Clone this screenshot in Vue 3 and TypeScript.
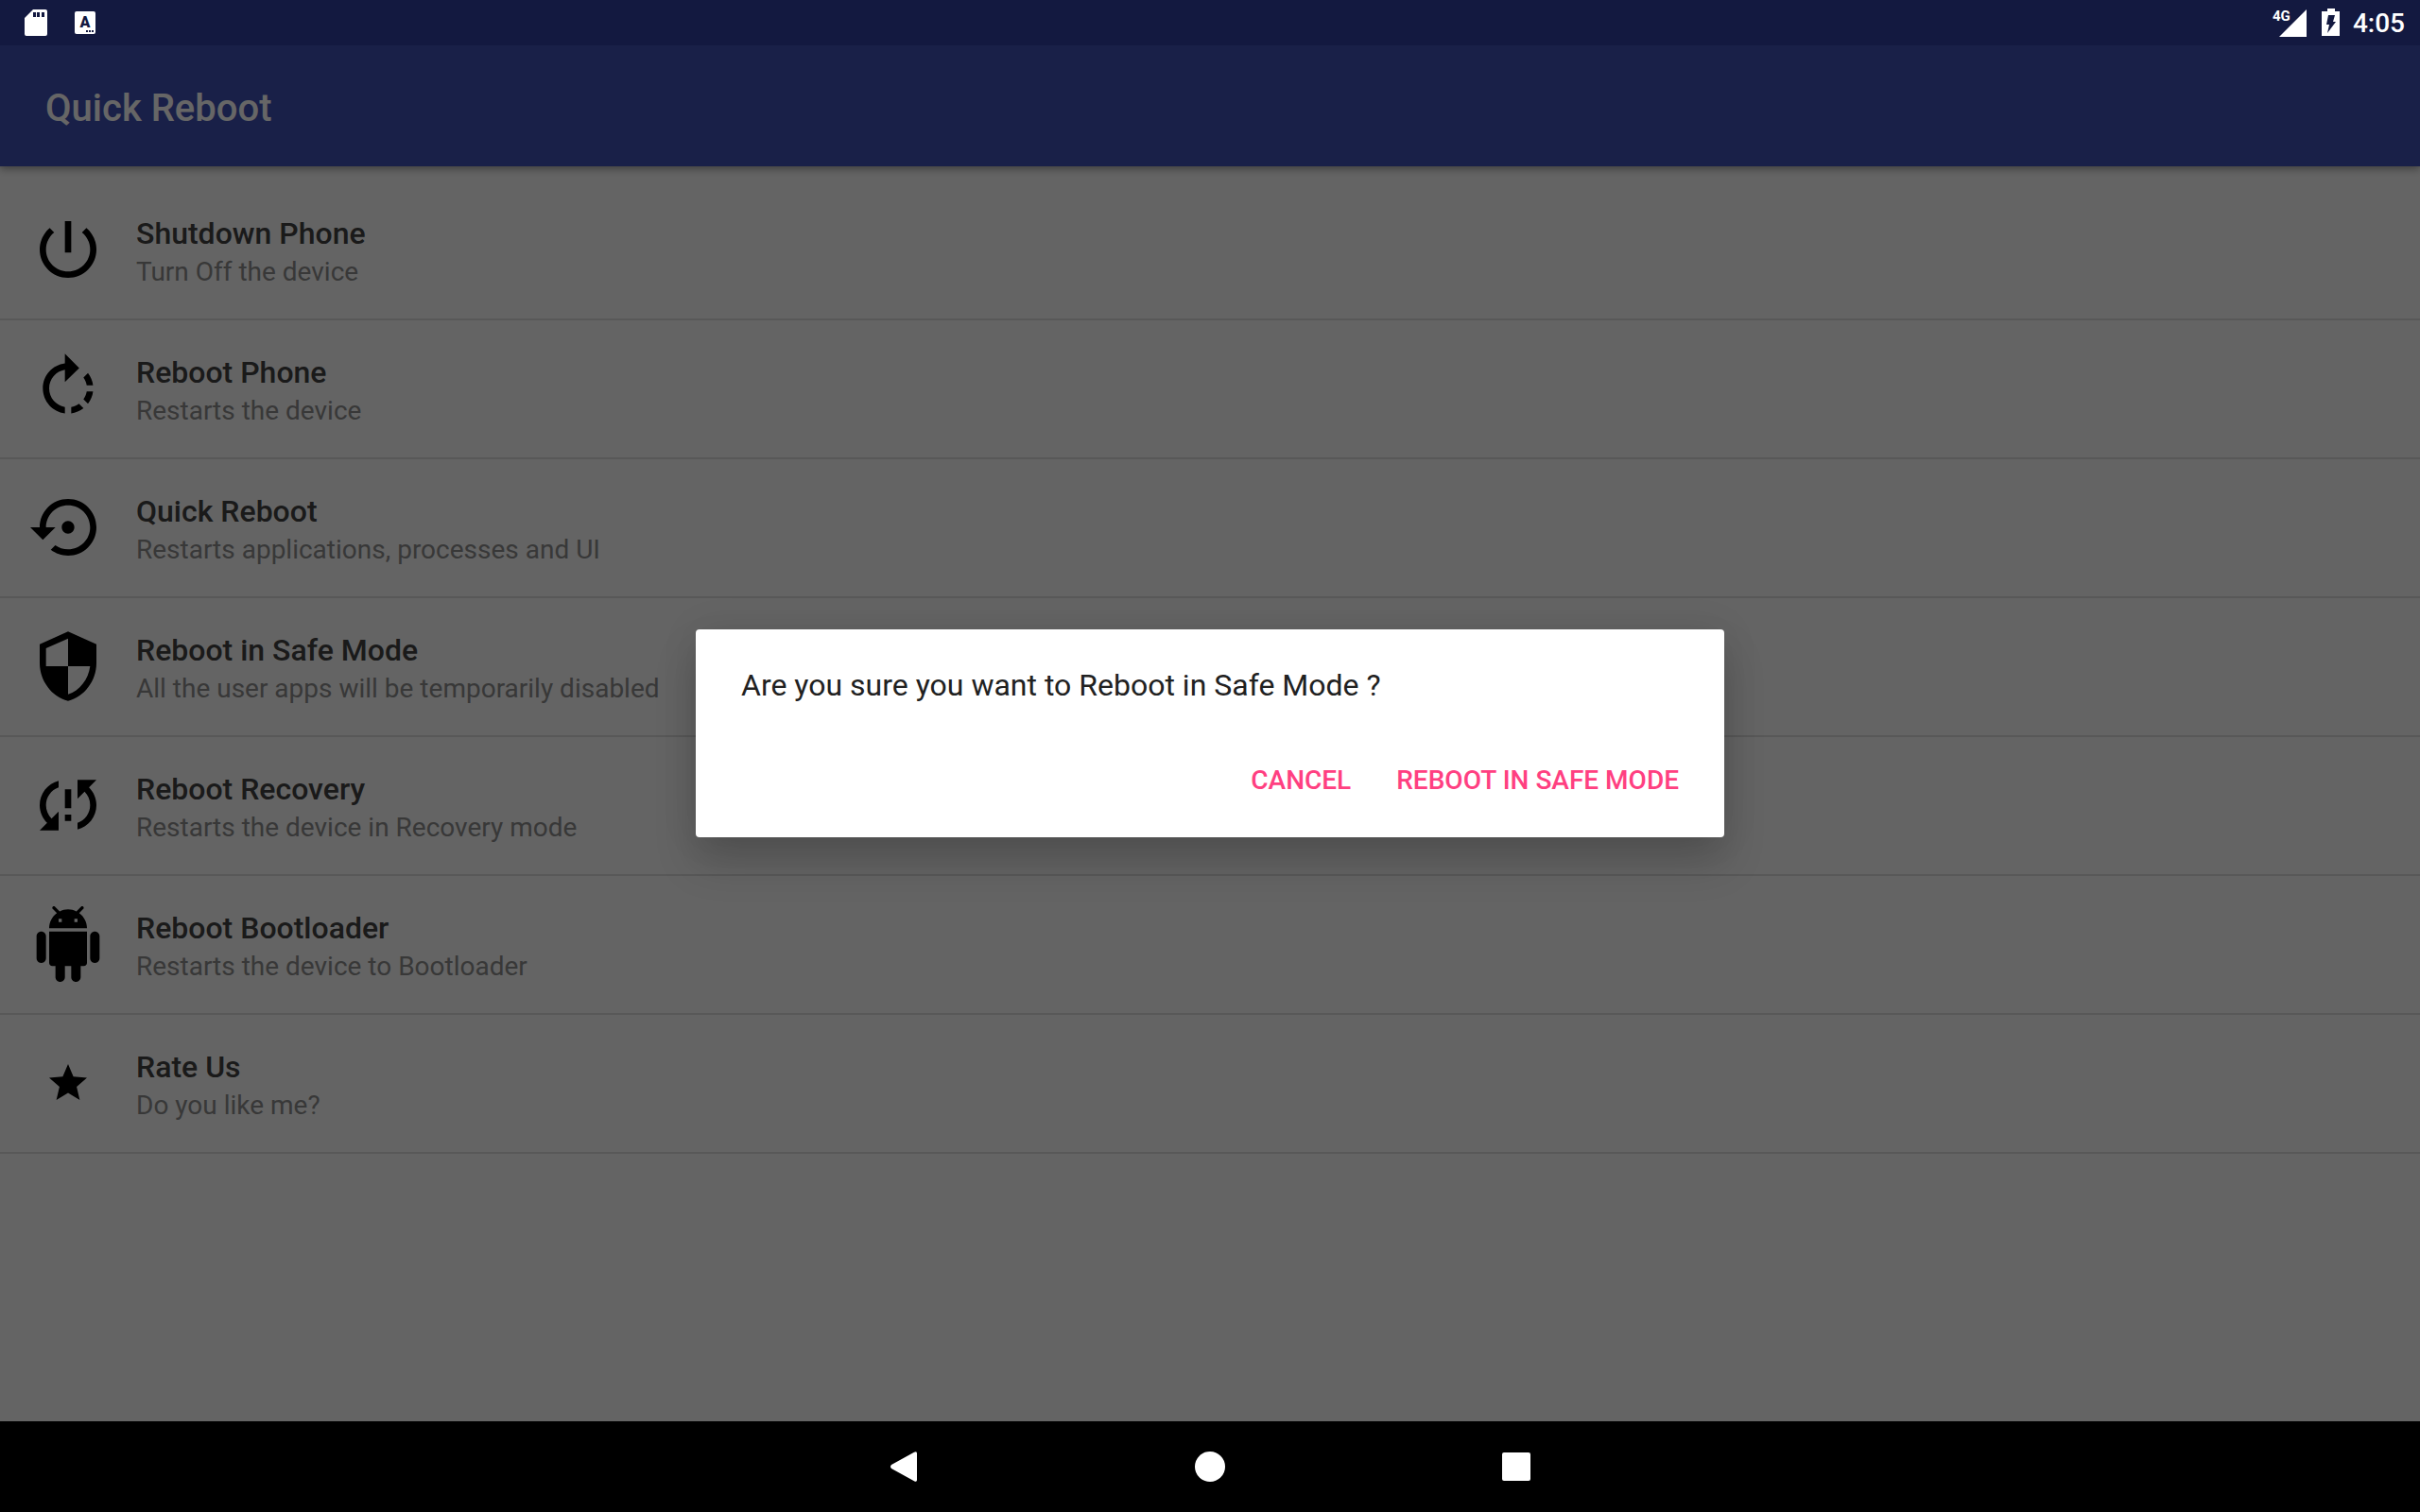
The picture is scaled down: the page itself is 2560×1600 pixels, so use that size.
<script setup lang="ts">
import { ref } from 'vue'

interface Action {
  title: string
  detail: string
  icon: string
  small?: boolean
}

const actions: Action[] = [
  {
    title: 'Shutdown Phone',
    detail: 'Turn Off the device',
    icon: 'M13 3h-2v10h2V3zm4.83 2.17l-1.42 1.42C17.99 7.86 19 9.81 19 12c0 3.87-3.13 7-7 7s-7-3.13-7-7c0-2.19 1.01-4.14 2.58-5.42L6.17 5.17C4.23 6.82 3 9.26 3 12c0 4.97 4.03 9 9 9s9-4.03 9-9c0-2.74-1.23-5.18-3.17-6.83z',
  },
  {
    title: 'Reboot Phone',
    detail: 'Restarts the device',
    icon: 'M15.55 5.55L11 1v3.07C7.06 4.56 4 7.92 4 12s3.05 7.44 7 7.93v-2.02c-2.84-.48-5-2.94-5-5.91s2.16-5.43 5-5.91V10l4.55-4.45zM19.93 11c-.17-1.39-.72-2.73-1.62-3.89l-1.42 1.42c.54.75.88 1.6 1.02 2.47h2.02zM13 17.9v2.02c1.39-.17 2.74-.71 3.9-1.61l-1.44-1.44c-.75.54-1.59.89-2.46 1.03zm3.89-2.42l1.42 1.41c.9-1.16 1.45-2.5 1.62-3.89h-2.02c-.14.87-.48 1.72-1.02 2.48z',
  },
  {
    title: 'Quick Reboot',
    detail: 'Restarts applications, processes and UI',
    icon: 'M14 12c0-1.1-.9-2-2-2s-2 .9-2 2 .9 2 2 2 2-.9 2-2zm-2-9c-4.97 0-9 4.03-9 9H0l4 4 4-4H5c0-3.87 3.13-7 7-7s7 3.13 7 7-3.13 7-7 7c-1.51 0-2.91-.49-4.06-1.3l-1.42 1.44C8.04 20.3 9.94 21 12 21c4.97 0 9-4.03 9-9s-4.03-9-9-9z',
  },
  {
    title: 'Reboot in Safe Mode',
    detail: 'All the user apps will be temporarily disabled',
    icon: 'M12 1L3 5v6c0 5.55 3.84 10.74 9 12 5.16-1.26 9-6.45 9-12V5l-9-4zm0 10.99h7c-.53 4.12-3.28 7.79-7 8.94V12H5V6.3l7-3.11v8.8z',
  },
  {
    title: 'Reboot Recovery',
    detail: 'Restarts the device in Recovery mode',
    icon: 'M3 12c0 2.21.91 4.2 2.36 5.64L3 20h6v-6l-2.24 2.24C5.68 15.15 5 13.66 5 12c0-2.61 1.67-4.83 4-5.65V4.26C5.55 5.15 3 8.27 3 12zm8 5h2v-2h-2v2zM21 4h-6v6l2.24-2.24C18.32 8.85 19 10.34 19 12c0 2.61-1.67 4.83-4 5.65v2.09c3.45-.89 6-4.01 6-7.74 0-2.21-.91-4.2-2.36-5.64L21 4zm-10 9h2V7h-2v6z',
  },
  {
    title: 'Reboot Bootloader',
    detail: 'Restarts the device to Bootloader',
    icon: 'M6 18c0 .55.45 1 1 1h1v3.5c0 .83.67 1.5 1.5 1.5s1.5-.67 1.5-1.5V19h2v3.5c0 .83.67 1.5 1.5 1.5s1.5-.67 1.5-1.5V19h1c.55 0 1-.45 1-1V8H6v10zM3.5 8C2.67 8 2 8.67 2 9.5v7c0 .83.67 1.5 1.5 1.5S5 17.33 5 16.5v-7C5 8.67 4.33 8 3.5 8zm17 0c-.83 0-1.5.67-1.5 1.5v7c0 .83.67 1.5 1.5 1.5s1.5-.67 1.5-1.5v-7c0-.83-.67-1.5-1.5-1.5zm-4.97-5.84l1.3-1.3c.2-.2.2-.51 0-.71-.2-.2-.51-.2-.71 0l-1.48 1.48C13.85 1.23 12.95 1 12 1c-.96 0-1.86.23-2.66.63L7.85.15c-.2-.2-.51-.2-.71 0-.2.2-.2.51 0 .71l1.31 1.31C6.97 3.26 6 5.01 6 7h12c0-1.99-.97-3.75-2.47-4.84zM10 5H9V4h1v1zm5 0h-1V4h1v1z',
  },
  {
    title: 'Rate Us',
    detail: 'Do you like me?',
    icon: 'M12 17.27L18.18 21l-1.64-7.03L22 9.24l-7.19-.61L12 2 9.19 8.63 2 9.24l5.46 4.73L5.82 21z',
    small: true,
  },
]

const pending = ref<Action | null>(actions[3])
</script>

<template>
  <div class="screen">
    <header class="status-bar">
      <div class="status-group notices">
        <svg class="status-icon" viewBox="0 0 32 32" aria-hidden="true">
          <path
            fill-rule="evenodd"
            d="M13 2h13a2 2 0 0 1 2 2v24a2 2 0 0 1-2 2H6a2 2 0 0 1-2-2V11zM13 5v5h3V5zM17 5v5h3V5zM22 5v5h3V5z"
          />
        </svg>
        <svg class="status-icon" viewBox="0 0 32 32" aria-hidden="true">
          <rect x="5" y="4" width="22" height="24" rx="2" />
          <text class="letter" x="16" y="21" text-anchor="middle">A</text>
          <path class="dots" d="M17 24h2v2h-2zM20 24h2v2h-2zM23 24h2v2h-2z" />
        </svg>
      </div>
      <div class="status-group">
        <div class="signal">
          <svg class="signal-icon" viewBox="0 0 36 32" aria-hidden="true">
            <path d="M36 2v29H7z" />
          </svg>
          <span class="network">4G</span>
        </div>
        <svg class="battery" viewBox="0 0 20 32" aria-hidden="true">
          <path
            fill-rule="evenodd"
            d="M6 1h8v3h5v26H0V4h6zM7 8h7l-2 7h3L6 27l2-9H5z"
          />
        </svg>
        <time class="clock">4:05</time>
      </div>
    </header>

    <div class="stage">
      <div class="app-bar">
        <h1>Quick Reboot</h1>
      </div>
      <ul class="actions">
        <li v-for="action in actions" :key="action.title">
          <button class="row" type="button" @click="pending = action">
            <span class="icon-slot">
              <svg :class="['icon', { small: action.small }]" viewBox="0 0 24 24" aria-hidden="true">
                <path :d="action.icon" />
              </svg>
            </span>
            <span class="labels">
              <span class="title">{{ action.title }}</span>
              <span class="detail">{{ action.detail }}</span>
            </span>
          </button>
        </li>
      </ul>

      <div v-if="pending" class="scrim">
        <div class="dialog" role="dialog" aria-modal="true" aria-labelledby="question">
          <p id="question">Are you sure you want to {{ pending.title }} ?</p>
          <div class="dialog-buttons">
            <button type="button" @click="pending = null">CANCEL</button>
            <button type="button" @click="pending = null">{{ pending.title.toUpperCase() }}</button>
          </div>
        </div>
      </div>
    </div>

    <nav class="nav-bar">
      <button type="button" aria-label="Back">
        <svg viewBox="0 0 32 32" aria-hidden="true">
          <path d="M27 .8Q30-.8 30 2v28q0 2.800-3 1.200L3 18q-2-2 0-4z" />
        </svg>
      </button>
      <button type="button" aria-label="Home">
        <svg viewBox="0 0 32 32" aria-hidden="true"><circle cx="16" cy="16" r="16" /></svg>
      </button>
      <button type="button" aria-label="Overview">
        <svg viewBox="0 0 32 32" aria-hidden="true"><rect x="1" y="1" width="30" height="30" rx="2" /></svg>
      </button>
    </nav>
  </div>
</template>

<style>
body {
  margin: 0;
  background: #000;
}
</style>

<style scoped>
.screen {
  display: flex;
  flex-direction: column;
  min-height: 100vh;
  font-family: Roboto, "Noto Sans", sans-serif;
}

button {
  border: 0;
  background: none;
  font: inherit;
  cursor: pointer;
}

svg {
  display: block;
}

.status-bar {
  position: relative;
  z-index: 1;
  display: flex;
  justify-content: space-between;
  height: 48px;
  padding: 0 16px 0 22px;
  box-sizing: border-box;
  background: #131940;
  color: #fff;
  fill: #fff;
}

.status-group {
  display: flex;
  align-items: center;
}

.notices {
  gap: 20px;
}

.status-icon {
  width: 32px;
  height: 32px;
}

.letter {
  fill: #131940;
  font-size: 16px;
  font-weight: 900;
}

.dots {
  fill: #131940;
}

.signal {
  position: relative;
  margin-right: 16px;
}

.signal-icon {
  width: 36px;
  height: 32px;
}

.network {
  position: absolute;
  top: 1px;
  left: 0;
  font-size: 15px;
  font-weight: 700;
  line-height: 16px;
}

.battery {
  width: 20px;
  height: 32px;
  margin-right: 13px;
}

.clock {
  padding-top: 2px;
  font-size: 28px;
  font-weight: 500;
  line-height: 32px;
}

.stage {
  position: relative;
  display: flex;
  flex: 1;
  flex-direction: column;
  background: #fafafa;
}

.app-bar {
  display: flex;
  align-items: center;
  height: 128px;
  padding: 6px 48px 0;
  box-sizing: border-box;
  background: #3f51b5;
  box-shadow: 0 3px 8px rgba(0, 0, 0, 0.36);
}

h1 {
  margin: 0;
  color: #fff;
  font-size: 40px;
  font-weight: 500;
  line-height: 48px;
}

.actions {
  margin: 0;
  padding: 16px 0 0;
  list-style: none;
}

.actions li {
  border-bottom: 2px solid #dcdcdc;
}

.row {
  display: flex;
  gap: 32px;
  width: 100%;
  padding: 32px 32px 31px;
  text-align: left;
}

.icon-slot {
  display: flex;
  align-items: center;
  justify-content: center;
  width: 80px;
  height: 80px;
}

.icon {
  width: 80px;
  height: 80px;
  fill: #000;
}

.icon.small {
  width: 48px;
  height: 48px;
}

.labels {
  display: flex;
  flex-direction: column;
}

.title {
  color: #424242;
  font-size: 32px;
  font-weight: 500;
  line-height: 46px;
}

.detail {
  color: #8c8c8c;
  font-size: 28px;
  line-height: 36px;
}

.scrim {
  position: absolute;
  inset: 0;
  display: flex;
  align-items: center;
  justify-content: center;
  background: rgba(0, 0, 0, 0.6);
}

.dialog {
  width: min(1088px, calc(100% - 64px));
  padding: 40px 32px 24px;
  box-sizing: border-box;
  border-radius: 4px;
  background: #fff;
  box-shadow: 0 26px 44px rgba(0, 0, 0, 0.18), 0 0 40px rgba(0, 0, 0, 0.08);
}

.dialog p {
  margin: 0 16px 44px;
  color: #212121;
  font-size: 32px;
  line-height: 38px;
}

.dialog-buttons {
  display: flex;
  justify-content: flex-end;
  gap: 16px;
}

.dialog-buttons button {
  height: 74px;
  padding: 0 16px;
  color: #ff4081;
  font-size: 28px;
  font-weight: 500;
}

.nav-bar {
  display: flex;
  justify-content: center;
  height: 96px;
  background: #000;
}

.nav-bar button {
  display: flex;
  align-items: center;
  justify-content: center;
  width: 324px;
}

.nav-bar svg {
  width: 32px;
  height: 32px;
  fill: #fff;
}
</style>
